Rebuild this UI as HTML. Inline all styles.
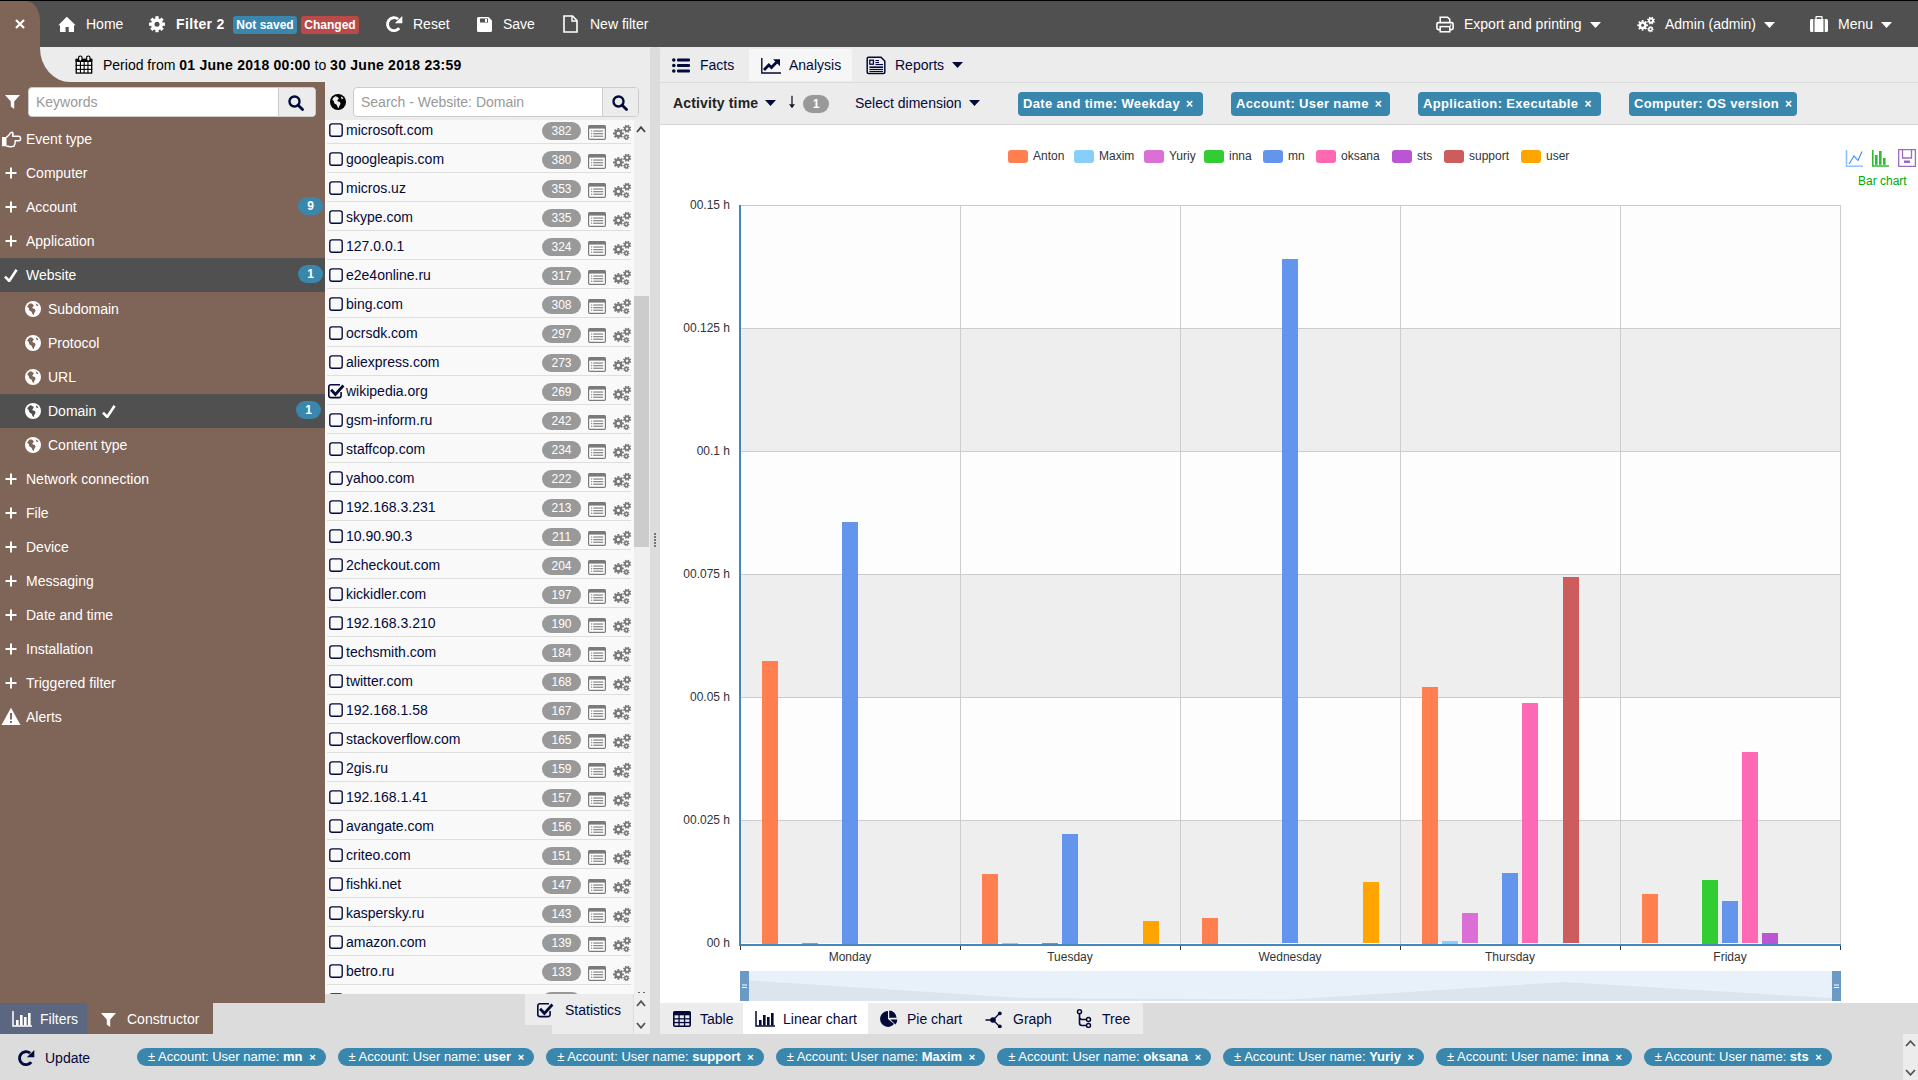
<!DOCTYPE html><html><head><meta charset="utf-8"><style>
html,body{margin:0;padding:0}
body{width:1918px;height:1080px;overflow:hidden;position:relative;background:#dcdcdc;font-family:"Liberation Sans",sans-serif}
</style></head><body>
<svg width="0" height="0" style="position:absolute"><symbol id="cb" viewBox="0 0 14 14"><rect x="0.8" y="0.8" width="12.4" height="12.4" rx="2.2" fill="none" stroke="#03093a" stroke-width="1.35"/></symbol><symbol id="la" viewBox="0 0 18 15"><rect x="0.6" y="0.6" width="16.8" height="13.8" rx="1.2" fill="#fff" stroke="#7a7a7a" stroke-width="1.2"/><rect x="0.6" y="0.6" width="16.8" height="3" fill="#7a7a7a"/><rect x="3" y="5.4" width="1.2" height="1.2" fill="#8a8a8a"/><rect x="5.2" y="5.4" width="10" height="1.3" fill="#8a8a8a"/><rect x="3" y="8.0" width="1.2" height="1.2" fill="#8a8a8a"/><rect x="5.2" y="8.0" width="10" height="1.3" fill="#8a8a8a"/><rect x="3" y="10.6" width="1.2" height="1.2" fill="#8a8a8a"/><rect x="5.2" y="10.6" width="10" height="1.3" fill="#8a8a8a"/></symbol><symbol id="cg" viewBox="0 0 19 18"><circle cx="5.4" cy="10.4" r="4.0" fill="#7a7a7a"/><rect x="4.45" y="5.0" width="1.9" height="5.4" fill="#7a7a7a" transform="rotate(0.0 5.4 10.4)"/><rect x="4.45" y="5.0" width="1.9" height="5.4" fill="#7a7a7a" transform="rotate(45.0 5.4 10.4)"/><rect x="4.45" y="5.0" width="1.9" height="5.4" fill="#7a7a7a" transform="rotate(90.0 5.4 10.4)"/><rect x="4.45" y="5.0" width="1.9" height="5.4" fill="#7a7a7a" transform="rotate(135.0 5.4 10.4)"/><rect x="4.45" y="5.0" width="1.9" height="5.4" fill="#7a7a7a" transform="rotate(180.0 5.4 10.4)"/><rect x="4.45" y="5.0" width="1.9" height="5.4" fill="#7a7a7a" transform="rotate(225.0 5.4 10.4)"/><rect x="4.45" y="5.0" width="1.9" height="5.4" fill="#7a7a7a" transform="rotate(270.0 5.4 10.4)"/><rect x="4.45" y="5.0" width="1.9" height="5.4" fill="#7a7a7a" transform="rotate(315.0 5.4 10.4)"/><circle cx="5.4" cy="10.4" r="1.6" fill="#f9f9f9"/><circle cx="14.1" cy="5.7" r="3.0" fill="#7a7a7a"/><rect x="13.35" y="1.6000000000000005" width="1.5" height="4.1" fill="#7a7a7a" transform="rotate(22.5 14.1 5.7)"/><rect x="13.35" y="1.6000000000000005" width="1.5" height="4.1" fill="#7a7a7a" transform="rotate(67.5 14.1 5.7)"/><rect x="13.35" y="1.6000000000000005" width="1.5" height="4.1" fill="#7a7a7a" transform="rotate(112.5 14.1 5.7)"/><rect x="13.35" y="1.6000000000000005" width="1.5" height="4.1" fill="#7a7a7a" transform="rotate(157.5 14.1 5.7)"/><rect x="13.35" y="1.6000000000000005" width="1.5" height="4.1" fill="#7a7a7a" transform="rotate(202.5 14.1 5.7)"/><rect x="13.35" y="1.6000000000000005" width="1.5" height="4.1" fill="#7a7a7a" transform="rotate(247.5 14.1 5.7)"/><rect x="13.35" y="1.6000000000000005" width="1.5" height="4.1" fill="#7a7a7a" transform="rotate(292.5 14.1 5.7)"/><rect x="13.35" y="1.6000000000000005" width="1.5" height="4.1" fill="#7a7a7a" transform="rotate(337.5 14.1 5.7)"/><circle cx="14.1" cy="5.7" r="1.2" fill="#f9f9f9"/><circle cx="13.3" cy="14.1" r="2.2" fill="#7a7a7a"/><rect x="12.700000000000001" y="11.0" width="1.2" height="3.1" fill="#7a7a7a" transform="rotate(10.0 13.3 14.1)"/><rect x="12.700000000000001" y="11.0" width="1.2" height="3.1" fill="#7a7a7a" transform="rotate(55.0 13.3 14.1)"/><rect x="12.700000000000001" y="11.0" width="1.2" height="3.1" fill="#7a7a7a" transform="rotate(100.0 13.3 14.1)"/><rect x="12.700000000000001" y="11.0" width="1.2" height="3.1" fill="#7a7a7a" transform="rotate(145.0 13.3 14.1)"/><rect x="12.700000000000001" y="11.0" width="1.2" height="3.1" fill="#7a7a7a" transform="rotate(190.0 13.3 14.1)"/><rect x="12.700000000000001" y="11.0" width="1.2" height="3.1" fill="#7a7a7a" transform="rotate(235.0 13.3 14.1)"/><rect x="12.700000000000001" y="11.0" width="1.2" height="3.1" fill="#7a7a7a" transform="rotate(280.0 13.3 14.1)"/><rect x="12.700000000000001" y="11.0" width="1.2" height="3.1" fill="#7a7a7a" transform="rotate(325.0 13.3 14.1)"/><circle cx="13.3" cy="14.1" r="0.9" fill="#f9f9f9"/></symbol><symbol id="cbc" viewBox="0 0 18 16"><path d="M13 1.8H4Q1.8 1.8 1.8 4V12.6Q1.8 14.6 4 14.6H12.1Q14.1 14.6 14.1 12.6V9" fill="none" stroke="#03093a" stroke-width="1.6"/><path d="M4.1 6.8L8.4 11.4L16.4 2.5" fill="none" stroke="#03093a" stroke-width="2.8"/></symbol></svg><div style="position:absolute;left:0px;top:0px;width:1918px;height:1px;background:#000;"></div>
<div style="position:absolute;left:0px;top:1px;width:1918px;height:46px;background:#505050;"></div>
<div style="position:absolute;left:0px;top:1px;width:40px;height:100px;background:#7f6458;border-top-right-radius:14px 20px"></div>
<div style="position:absolute;left:0px;top:47px;width:325px;height:956px;background:#7f6458;"></div>
<div style="position:absolute;left:40px;top:47px;width:620px;height:35px;background:#ececec;border-bottom-left-radius:30px 34px"></div>
<div style="position:absolute;left:325px;top:82px;width:325px;height:38px;background:#ececec;"></div>
<div style="position:absolute;left:325px;top:120px;width:309px;height:874px;background:#f9f9f9;"></div>
<div style="position:absolute;left:634px;top:120px;width:16px;height:914px;background:#efefef;"></div>
<div style="position:absolute;left:634px;top:296px;width:15px;height:251px;background:#cccccc;"></div>
<div style="position:absolute;left:650px;top:47px;width:10px;height:987px;background:#dcdcdc;border-radius:3px"></div>
<div style="position:absolute;left:654px;top:533px;width:2px;height:2px;background:#555;border-radius:1px"></div>
<div style="position:absolute;left:654px;top:536px;width:2px;height:2px;background:#555;border-radius:1px"></div>
<div style="position:absolute;left:654px;top:539px;width:2px;height:2px;background:#555;border-radius:1px"></div>
<div style="position:absolute;left:654px;top:542px;width:2px;height:2px;background:#555;border-radius:1px"></div>
<div style="position:absolute;left:654px;top:545px;width:2px;height:2px;background:#555;border-radius:1px"></div>
<div style="position:absolute;left:660px;top:47px;width:1258px;height:35px;background:#ececec;border-bottom:1px solid #dcdcdc"></div>
<div style="position:absolute;left:749px;top:49px;width:103px;height:32px;background:#f6f6f6;"></div>
<div style="position:absolute;left:660px;top:83px;width:1258px;height:41px;background:#ececec;border-bottom:1px solid #d6d6d6"></div>
<div style="position:absolute;left:660px;top:125px;width:1258px;height:878px;background:#fff;"></div>
<div style="position:absolute;left:660px;top:1003px;width:483px;height:31px;background:#ececec;"></div>
<div style="position:absolute;left:743px;top:1003px;width:125px;height:31px;background:#fff;"></div>
<div style="position:absolute;left:0px;top:1003px;width:87px;height:31px;background:#5b6680;"></div>
<div style="position:absolute;left:87px;top:1003px;width:126px;height:31px;background:#7f6458;"></div>
<div style="position:absolute;left:525px;top:994px;width:108px;height:31px;background:#ececec;"></div>
<div style="position:absolute;left:552px;top:1025px;width:81px;height:9px;background:#ececec;"></div>
<div style="position:absolute;left:1903px;top:1034px;width:15px;height:46px;background:#ececec;"></div>
<svg style="position:absolute;left:15px;top:19px" width="10" height="10" viewBox="0 0 10 10" ><path d="M1 1L9 9M9 1L1 9" stroke="#fff" stroke-width="2.2"/></svg>
<svg style="position:absolute;left:58px;top:16px" width="18" height="16" viewBox="0 0 18 16" ><path d="M8.8 0.8L17.7 9.3H16V16H10.7V11H7.6V16H2V9.3H0.3Z" fill="#fff"/></svg>
<div style="position:absolute;left:86px;top:16px;font-size:14px;line-height:16px;color:#fff;font-weight:normal;white-space:nowrap;">Home</div>
<svg style="position:absolute;left:149px;top:16px" width="18" height="18" viewBox="0 0 18 18" ><circle cx="8" cy="8.2" r="6" fill="#fff"/><rect x="6.4" y="0.1999999999999993" width="3.2" height="8" fill="#fff" transform="rotate(0.0 8 8.2)"/><rect x="6.4" y="0.1999999999999993" width="3.2" height="8" fill="#fff" transform="rotate(45.0 8 8.2)"/><rect x="6.4" y="0.1999999999999993" width="3.2" height="8" fill="#fff" transform="rotate(90.0 8 8.2)"/><rect x="6.4" y="0.1999999999999993" width="3.2" height="8" fill="#fff" transform="rotate(135.0 8 8.2)"/><rect x="6.4" y="0.1999999999999993" width="3.2" height="8" fill="#fff" transform="rotate(180.0 8 8.2)"/><rect x="6.4" y="0.1999999999999993" width="3.2" height="8" fill="#fff" transform="rotate(225.0 8 8.2)"/><rect x="6.4" y="0.1999999999999993" width="3.2" height="8" fill="#fff" transform="rotate(270.0 8 8.2)"/><rect x="6.4" y="0.1999999999999993" width="3.2" height="8" fill="#fff" transform="rotate(315.0 8 8.2)"/><circle cx="8" cy="8.2" r="2.5" fill="#505050"/></svg>
<div style="position:absolute;left:176px;top:16px;font-size:14px;line-height:16px;color:#fff;font-weight:bold;white-space:nowrap;letter-spacing:0.35px">Filter 2</div>
<div style="position:absolute;left:233px;top:16px;width:64px;height:18px;background:#3a87ad;border-radius:3px;color:#fff;font-weight:bold;font-size:12px;line-height:18px;text-align:center">Not saved</div>
<div style="position:absolute;left:301px;top:16px;width:58px;height:18px;background:#b94a48;border-radius:3px;color:#fff;font-weight:bold;font-size:12px;line-height:18px;text-align:center">Changed</div>
<svg style="position:absolute;left:385px;top:15px" width="18" height="18" viewBox="0 0 18 18" ><path d="M13.1 4.1A6.5 6.5 0 1 0 14.2 13.1" fill="none" stroke="#fff" stroke-width="2.9"/><path d="M9.8 8.3H17.3V0.9Z" fill="#fff"/></svg>
<div style="position:absolute;left:413px;top:16px;font-size:14px;line-height:16px;color:#fff;font-weight:normal;white-space:nowrap;">Reset</div>
<svg style="position:absolute;left:477px;top:17px" width="15" height="15" viewBox="0 0 15 15" ><path d="M0 1.5Q0 0 1.5 0H11.5L15 3.5V13.5Q15 15 13.5 15H1.5Q0 15 0 13.5Z" fill="#fff"/><rect x="3" y="1.5" width="8" height="4" fill="#505050"/><rect x="8" y="2" width="2" height="3" fill="#fff"/></svg>
<div style="position:absolute;left:503px;top:16px;font-size:14px;line-height:16px;color:#fff;font-weight:normal;white-space:nowrap;">Save</div>
<svg style="position:absolute;left:563px;top:15px" width="15" height="18" viewBox="0 0 15 18" ><path d="M1 1H9.5L14 5.5V17H1Z" fill="none" stroke="#fff" stroke-width="1.6"/><path d="M9 1V6H14" fill="none" stroke="#fff" stroke-width="1.4"/></svg>
<div style="position:absolute;left:590px;top:16px;font-size:14px;line-height:16px;color:#fff;font-weight:normal;white-space:nowrap;">New filter</div>
<svg style="position:absolute;left:1436px;top:16px" width="18" height="17" viewBox="0 0 18 17" ><path d="M4.2 7V1.2H11.6L13.8 3.4V7" fill="none" stroke="#fff" stroke-width="1.5"/><rect x="0.9" y="6.6" width="16.2" height="7" rx="1.5" fill="none" stroke="#fff" stroke-width="1.6"/><rect x="4.2" y="10.6" width="9.6" height="5.2" fill="#505050" stroke="#fff" stroke-width="1.5"/><rect x="14" y="8.5" width="1.3" height="1.3" fill="#fff"/></svg>
<div style="position:absolute;left:1464px;top:16px;font-size:14px;line-height:16px;color:#fff;font-weight:normal;white-space:nowrap;">Export and printing</div>
<svg style="position:absolute;left:1590px;top:22px" width="11" height="6" viewBox="0 0 11 6" ><path d="M0 0H11L5.5 6Z" fill="#fff"/></svg>
<svg style="position:absolute;left:1637px;top:16px" width="19" height="18" viewBox="0 0 19 18" ><circle cx="5.6" cy="9.3" r="3.9" fill="#fff"/><rect x="4.699999999999999" y="4.000000000000001" width="1.8" height="5.3" fill="#fff" transform="rotate(0.0 5.6 9.3)"/><rect x="4.699999999999999" y="4.000000000000001" width="1.8" height="5.3" fill="#fff" transform="rotate(45.0 5.6 9.3)"/><rect x="4.699999999999999" y="4.000000000000001" width="1.8" height="5.3" fill="#fff" transform="rotate(90.0 5.6 9.3)"/><rect x="4.699999999999999" y="4.000000000000001" width="1.8" height="5.3" fill="#fff" transform="rotate(135.0 5.6 9.3)"/><rect x="4.699999999999999" y="4.000000000000001" width="1.8" height="5.3" fill="#fff" transform="rotate(180.0 5.6 9.3)"/><rect x="4.699999999999999" y="4.000000000000001" width="1.8" height="5.3" fill="#fff" transform="rotate(225.0 5.6 9.3)"/><rect x="4.699999999999999" y="4.000000000000001" width="1.8" height="5.3" fill="#fff" transform="rotate(270.0 5.6 9.3)"/><rect x="4.699999999999999" y="4.000000000000001" width="1.8" height="5.3" fill="#fff" transform="rotate(315.0 5.6 9.3)"/><circle cx="5.6" cy="9.3" r="1.5" fill="#505050"/><circle cx="14" cy="4.6" r="2.9" fill="#fff"/><rect x="13.3" y="0.5999999999999996" width="1.4" height="4.0" fill="#fff" transform="rotate(22.5 14 4.6)"/><rect x="13.3" y="0.5999999999999996" width="1.4" height="4.0" fill="#fff" transform="rotate(67.5 14 4.6)"/><rect x="13.3" y="0.5999999999999996" width="1.4" height="4.0" fill="#fff" transform="rotate(112.5 14 4.6)"/><rect x="13.3" y="0.5999999999999996" width="1.4" height="4.0" fill="#fff" transform="rotate(157.5 14 4.6)"/><rect x="13.3" y="0.5999999999999996" width="1.4" height="4.0" fill="#fff" transform="rotate(202.5 14 4.6)"/><rect x="13.3" y="0.5999999999999996" width="1.4" height="4.0" fill="#fff" transform="rotate(247.5 14 4.6)"/><rect x="13.3" y="0.5999999999999996" width="1.4" height="4.0" fill="#fff" transform="rotate(292.5 14 4.6)"/><rect x="13.3" y="0.5999999999999996" width="1.4" height="4.0" fill="#fff" transform="rotate(337.5 14 4.6)"/><circle cx="14" cy="4.6" r="1.1" fill="#505050"/><circle cx="13.5" cy="13.2" r="2.2" fill="#fff"/><rect x="12.9" y="10.1" width="1.2" height="3.1" fill="#fff" transform="rotate(10.0 13.5 13.2)"/><rect x="12.9" y="10.1" width="1.2" height="3.1" fill="#fff" transform="rotate(55.0 13.5 13.2)"/><rect x="12.9" y="10.1" width="1.2" height="3.1" fill="#fff" transform="rotate(100.0 13.5 13.2)"/><rect x="12.9" y="10.1" width="1.2" height="3.1" fill="#fff" transform="rotate(145.0 13.5 13.2)"/><rect x="12.9" y="10.1" width="1.2" height="3.1" fill="#fff" transform="rotate(190.0 13.5 13.2)"/><rect x="12.9" y="10.1" width="1.2" height="3.1" fill="#fff" transform="rotate(235.0 13.5 13.2)"/><rect x="12.9" y="10.1" width="1.2" height="3.1" fill="#fff" transform="rotate(280.0 13.5 13.2)"/><rect x="12.9" y="10.1" width="1.2" height="3.1" fill="#fff" transform="rotate(325.0 13.5 13.2)"/><circle cx="13.5" cy="13.2" r="0.9" fill="#505050"/></svg>
<div style="position:absolute;left:1665px;top:16px;font-size:14px;line-height:16px;color:#fff;font-weight:normal;white-space:nowrap;">Admin (admin)</div>
<svg style="position:absolute;left:1764px;top:22px" width="11" height="6" viewBox="0 0 11 6" ><path d="M0 0H11L5.5 6Z" fill="#fff"/></svg>
<svg style="position:absolute;left:1810px;top:16px" width="18" height="16" viewBox="0 0 18 16" ><path d="M6 3V1.2Q6 0.5 6.8 0.5H11.2Q12 0.5 12 1.2V3" fill="none" stroke="#fff" stroke-width="1.3"/><rect x="0" y="3" width="18" height="13" rx="1.5" fill="#fff"/><rect x="3.3" y="3" width="1.2" height="13" fill="#505050"/><rect x="13.5" y="3" width="1.2" height="13" fill="#505050"/></svg>
<div style="position:absolute;left:1838px;top:16px;font-size:14px;line-height:16px;color:#fff;font-weight:normal;white-space:nowrap;">Menu</div>
<svg style="position:absolute;left:1881px;top:22px" width="11" height="6" viewBox="0 0 11 6" ><path d="M0 0H11L5.5 6Z" fill="#fff"/></svg>
<svg style="position:absolute;left:75px;top:55px" width="18" height="19" viewBox="0 0 18 19" ><rect x="1.25" y="4.45" width="15.4" height="13.6" fill="#fff" stroke="#000" stroke-width="1.3"/><rect x="0.6" y="3.8" width="16.7" height="3.2" fill="#000"/><rect x="4.9" y="6.5" width="1.1" height="11.5" fill="#000"/><rect x="8.6" y="6.5" width="1.1" height="11.5" fill="#000"/><rect x="12.4" y="6.5" width="1.1" height="11.5" fill="#000"/><rect x="0.6" y="9.8" width="16.7" height="1.1" fill="#000"/><rect x="0.6" y="13.8" width="16.7" height="1.1" fill="#000"/><rect x="3.6" y="1" width="3.4" height="5.2" rx="1.7" fill="#fff" stroke="#000" stroke-width="1.2"/><rect x="11.6" y="1" width="3.4" height="5.2" rx="1.7" fill="#fff" stroke="#000" stroke-width="1.2"/></svg>
<div style="position:absolute;left:103px;top:57px;font-size:14px;line-height:16px;color:#000;font-weight:normal;white-space:nowrap;">Period from <b style="letter-spacing:0.25px">01 June 2018 00:00</b> to <b style="letter-spacing:0.25px">30 June 2018 23:59</b></div>
<svg style="position:absolute;left:5px;top:95px" width="15" height="14" viewBox="0 0 15 14" ><path d="M0 0H15L9.2 6.5V14L5.8 11.5V6.5Z" fill="#fff"/></svg>
<div style="position:absolute;left:28px;top:87px;width:286px;height:28px;background:#fff;border:1px solid #ccc;border-radius:4px;overflow:hidden"><div style="position:absolute;left:7px;top:0;line-height:28px;font-size:14px;color:#999">Keywords</div><div style="position:absolute;right:0;top:0;width:36px;height:28px;background:#ececec;border-left:1px solid #ccc"></div></div><svg style="position:absolute;left:288px;top:95px" width="16" height="16" viewBox="0 0 16 16" ><circle cx="6.5" cy="6.5" r="5" fill="none" stroke="#03093a" stroke-width="2.4"/><path d="M10 10L14.5 14.5" stroke="#03093a" stroke-width="2.8" stroke-linecap="round"/></svg>
<svg style="position:absolute;left:0px;top:131px" width="22" height="17" viewBox="0 0 22 17" ><rect x="2" y="6" width="4.5" height="9.3" fill="#fff"/><path d="M6.3 6.5L9 4Q10.5 1.2 12 1.2Q13.6 1.8 12.6 5.2H19Q20.6 5.4 20.6 7.5Q20.6 9.6 19 9.7H15.2Q15.2 13.5 14 15Q12 16 9 15.5L6.3 15" fill="none" stroke="#fff" stroke-width="1.5" stroke-linejoin="round"/></svg>
<div style="position:absolute;left:26px;top:131px;font-size:14px;line-height:16px;color:#fff;font-weight:normal;white-space:nowrap;">Event type</div>
<svg style="position:absolute;left:5px;top:167px" width="12" height="12" viewBox="0 0 12 12" ><path d="M6 0.5V11.5M0.5 6H11.5" stroke="#fff" stroke-width="2"/></svg>
<div style="position:absolute;left:26px;top:165px;font-size:14px;line-height:16px;color:#fff;font-weight:normal;white-space:nowrap;">Computer</div>
<svg style="position:absolute;left:5px;top:201px" width="12" height="12" viewBox="0 0 12 12" ><path d="M6 0.5V11.5M0.5 6H11.5" stroke="#fff" stroke-width="2"/></svg>
<div style="position:absolute;left:26px;top:199px;font-size:14px;line-height:16px;color:#fff;font-weight:normal;white-space:nowrap;">Account</div>
<div style="position:absolute;left:298px;top:197px;width:25px;height:18px;background:#3a87ad;border-radius:9px;color:#fff;font-weight:bold;font-size:12px;line-height:18px;text-align:center">9</div>
<svg style="position:absolute;left:5px;top:235px" width="12" height="12" viewBox="0 0 12 12" ><path d="M6 0.5V11.5M0.5 6H11.5" stroke="#fff" stroke-width="2"/></svg>
<div style="position:absolute;left:26px;top:233px;font-size:14px;line-height:16px;color:#fff;font-weight:normal;white-space:nowrap;">Application</div>
<div style="position:absolute;left:0px;top:258px;width:325px;height:34px;background:#505050;"></div>
<svg style="position:absolute;left:3px;top:268px" width="16" height="14" viewBox="0 0 16 14" ><path d="M2 8.6L6.2 13L13.6 1.8" fill="none" stroke="#fff" stroke-width="2.6"/></svg>
<div style="position:absolute;left:26px;top:267px;font-size:14px;line-height:16px;color:#fff;font-weight:normal;white-space:nowrap;">Website</div>
<div style="position:absolute;left:298px;top:265px;width:25px;height:18px;background:#3a87ad;border-radius:9px;color:#fff;font-weight:bold;font-size:12px;line-height:18px;text-align:center">1</div>
<svg style="position:absolute;left:25px;top:301px" width="16" height="16" viewBox="0 0 16 16" ><circle cx="8" cy="8" r="8" fill="#fff"/><path d="M5.5 2.2C6.8 2.5 8 3 8.6 4.1C9 4.9 8.1 5.6 7.5 6.2C7 6.8 7.8 7.4 8.5 7.6C9.6 7.9 10.6 8.6 10.5 9.8C10.4 11 9.2 11.6 9 12.8L8.8 14.2C7.6 13.6 7.2 12.4 6.9 11.3C6.6 10.4 5.3 10.2 4.6 9.6C3.8 9 4.2 7.7 3.6 7C3.2 6.5 2.5 6.3 2.3 5.6C3 4 4.1 2.8 5.5 2.2Z" fill="#7f6458"/><path d="M11 2.6C12 3 12.8 3.8 13.4 4.6L12 5.2C11.5 4.6 10.8 4 11 2.6Z" fill="#7f6458"/></svg>
<div style="position:absolute;left:48px;top:301px;font-size:14px;line-height:16px;color:#fff;font-weight:normal;white-space:nowrap;">Subdomain</div>
<svg style="position:absolute;left:25px;top:335px" width="16" height="16" viewBox="0 0 16 16" ><circle cx="8" cy="8" r="8" fill="#fff"/><path d="M5.5 2.2C6.8 2.5 8 3 8.6 4.1C9 4.9 8.1 5.6 7.5 6.2C7 6.8 7.8 7.4 8.5 7.6C9.6 7.9 10.6 8.6 10.5 9.8C10.4 11 9.2 11.6 9 12.8L8.8 14.2C7.6 13.6 7.2 12.4 6.9 11.3C6.6 10.4 5.3 10.2 4.6 9.6C3.8 9 4.2 7.7 3.6 7C3.2 6.5 2.5 6.3 2.3 5.6C3 4 4.1 2.8 5.5 2.2Z" fill="#7f6458"/><path d="M11 2.6C12 3 12.8 3.8 13.4 4.6L12 5.2C11.5 4.6 10.8 4 11 2.6Z" fill="#7f6458"/></svg>
<div style="position:absolute;left:48px;top:335px;font-size:14px;line-height:16px;color:#fff;font-weight:normal;white-space:nowrap;">Protocol</div>
<svg style="position:absolute;left:25px;top:369px" width="16" height="16" viewBox="0 0 16 16" ><circle cx="8" cy="8" r="8" fill="#fff"/><path d="M5.5 2.2C6.8 2.5 8 3 8.6 4.1C9 4.9 8.1 5.6 7.5 6.2C7 6.8 7.8 7.4 8.5 7.6C9.6 7.9 10.6 8.6 10.5 9.8C10.4 11 9.2 11.6 9 12.8L8.8 14.2C7.6 13.6 7.2 12.4 6.9 11.3C6.6 10.4 5.3 10.2 4.6 9.6C3.8 9 4.2 7.7 3.6 7C3.2 6.5 2.5 6.3 2.3 5.6C3 4 4.1 2.8 5.5 2.2Z" fill="#7f6458"/><path d="M11 2.6C12 3 12.8 3.8 13.4 4.6L12 5.2C11.5 4.6 10.8 4 11 2.6Z" fill="#7f6458"/></svg>
<div style="position:absolute;left:48px;top:369px;font-size:14px;line-height:16px;color:#fff;font-weight:normal;white-space:nowrap;">URL</div>
<div style="position:absolute;left:0px;top:394px;width:325px;height:34px;background:#505050;"></div>
<svg style="position:absolute;left:25px;top:403px" width="16" height="16" viewBox="0 0 16 16" ><circle cx="8" cy="8" r="8" fill="#fff"/><path d="M5.5 2.2C6.8 2.5 8 3 8.6 4.1C9 4.9 8.1 5.6 7.5 6.2C7 6.8 7.8 7.4 8.5 7.6C9.6 7.9 10.6 8.6 10.5 9.8C10.4 11 9.2 11.6 9 12.8L8.8 14.2C7.6 13.6 7.2 12.4 6.9 11.3C6.6 10.4 5.3 10.2 4.6 9.6C3.8 9 4.2 7.7 3.6 7C3.2 6.5 2.5 6.3 2.3 5.6C3 4 4.1 2.8 5.5 2.2Z" fill="#505050"/><path d="M11 2.6C12 3 12.8 3.8 13.4 4.6L12 5.2C11.5 4.6 10.8 4 11 2.6Z" fill="#505050"/></svg>
<div style="position:absolute;left:48px;top:403px;font-size:14px;line-height:16px;color:#fff;font-weight:normal;white-space:nowrap;">Domain <span style="display:inline-block;width:16px"></span></div>
<svg style="position:absolute;left:101px;top:404px" width="16" height="14" viewBox="0 0 16 14" ><path d="M2 8.6L6.2 13L13.6 1.8" fill="none" stroke="#fff" stroke-width="2.6"/></svg>
<div style="position:absolute;left:296px;top:401px;width:25px;height:18px;background:#3a87ad;border-radius:9px;color:#fff;font-weight:bold;font-size:12px;line-height:18px;text-align:center">1</div>
<svg style="position:absolute;left:25px;top:437px" width="16" height="16" viewBox="0 0 16 16" ><circle cx="8" cy="8" r="8" fill="#fff"/><path d="M5.5 2.2C6.8 2.5 8 3 8.6 4.1C9 4.9 8.1 5.6 7.5 6.2C7 6.8 7.8 7.4 8.5 7.6C9.6 7.9 10.6 8.6 10.5 9.8C10.4 11 9.2 11.6 9 12.8L8.8 14.2C7.6 13.6 7.2 12.4 6.9 11.3C6.6 10.4 5.3 10.2 4.6 9.6C3.8 9 4.2 7.7 3.6 7C3.2 6.5 2.5 6.3 2.3 5.6C3 4 4.1 2.8 5.5 2.2Z" fill="#7f6458"/><path d="M11 2.6C12 3 12.8 3.8 13.4 4.6L12 5.2C11.5 4.6 10.8 4 11 2.6Z" fill="#7f6458"/></svg>
<div style="position:absolute;left:48px;top:437px;font-size:14px;line-height:16px;color:#fff;font-weight:normal;white-space:nowrap;">Content type</div>
<svg style="position:absolute;left:5px;top:473px" width="12" height="12" viewBox="0 0 12 12" ><path d="M6 0.5V11.5M0.5 6H11.5" stroke="#fff" stroke-width="2"/></svg>
<div style="position:absolute;left:26px;top:471px;font-size:14px;line-height:16px;color:#fff;font-weight:normal;white-space:nowrap;">Network connection</div>
<svg style="position:absolute;left:5px;top:507px" width="12" height="12" viewBox="0 0 12 12" ><path d="M6 0.5V11.5M0.5 6H11.5" stroke="#fff" stroke-width="2"/></svg>
<div style="position:absolute;left:26px;top:505px;font-size:14px;line-height:16px;color:#fff;font-weight:normal;white-space:nowrap;">File</div>
<svg style="position:absolute;left:5px;top:541px" width="12" height="12" viewBox="0 0 12 12" ><path d="M6 0.5V11.5M0.5 6H11.5" stroke="#fff" stroke-width="2"/></svg>
<div style="position:absolute;left:26px;top:539px;font-size:14px;line-height:16px;color:#fff;font-weight:normal;white-space:nowrap;">Device</div>
<svg style="position:absolute;left:5px;top:575px" width="12" height="12" viewBox="0 0 12 12" ><path d="M6 0.5V11.5M0.5 6H11.5" stroke="#fff" stroke-width="2"/></svg>
<div style="position:absolute;left:26px;top:573px;font-size:14px;line-height:16px;color:#fff;font-weight:normal;white-space:nowrap;">Messaging</div>
<svg style="position:absolute;left:5px;top:609px" width="12" height="12" viewBox="0 0 12 12" ><path d="M6 0.5V11.5M0.5 6H11.5" stroke="#fff" stroke-width="2"/></svg>
<div style="position:absolute;left:26px;top:607px;font-size:14px;line-height:16px;color:#fff;font-weight:normal;white-space:nowrap;">Date and time</div>
<svg style="position:absolute;left:5px;top:643px" width="12" height="12" viewBox="0 0 12 12" ><path d="M6 0.5V11.5M0.5 6H11.5" stroke="#fff" stroke-width="2"/></svg>
<div style="position:absolute;left:26px;top:641px;font-size:14px;line-height:16px;color:#fff;font-weight:normal;white-space:nowrap;">Installation</div>
<svg style="position:absolute;left:5px;top:677px" width="12" height="12" viewBox="0 0 12 12" ><path d="M6 0.5V11.5M0.5 6H11.5" stroke="#fff" stroke-width="2"/></svg>
<div style="position:absolute;left:26px;top:675px;font-size:14px;line-height:16px;color:#fff;font-weight:normal;white-space:nowrap;">Triggered filter</div>
<svg style="position:absolute;left:0px;top:707px" width="22" height="19" viewBox="0 0 22 19" ><path d="M11 0.8L20.5 18H1.5Z" fill="#fff"/><path d="M11 6V12.6" stroke="#7f6458" stroke-width="2"/><rect x="10" y="14" width="2" height="1.9" fill="#7f6458"/></svg>
<div style="position:absolute;left:26px;top:709px;font-size:14px;line-height:16px;color:#fff;font-weight:normal;white-space:nowrap;">Alerts</div>
<svg style="position:absolute;left:330px;top:94px" width="16" height="16" viewBox="0 0 16 16" ><circle cx="8" cy="8" r="8" fill="#000"/><path d="M5.5 2.2C6.8 2.5 8 3 8.6 4.1C9 4.9 8.1 5.6 7.5 6.2C7 6.8 7.8 7.4 8.5 7.6C9.6 7.9 10.6 8.6 10.5 9.8C10.4 11 9.2 11.6 9 12.8L8.8 14.2C7.6 13.6 7.2 12.4 6.9 11.3C6.6 10.4 5.3 10.2 4.6 9.6C3.8 9 4.2 7.7 3.6 7C3.2 6.5 2.5 6.3 2.3 5.6C3 4 4.1 2.8 5.5 2.2Z" fill="#ececec"/><path d="M11 2.6C12 3 12.8 3.8 13.4 4.6L12 5.2C11.5 4.6 10.8 4 11 2.6Z" fill="#ececec"/></svg>
<div style="position:absolute;left:353px;top:87px;width:284px;height:28px;background:#fff;border:1px solid #ccc;border-radius:4px;overflow:hidden"><div style="position:absolute;left:7px;top:0;line-height:28px;font-size:14px;color:#999">Search - Website: Domain</div><div style="position:absolute;right:0;top:0;width:35px;height:28px;background:#ececec;border-left:1px solid #ccc"></div></div><svg style="position:absolute;left:612px;top:95px" width="16" height="16" viewBox="0 0 16 16" ><circle cx="6.5" cy="6.5" r="5" fill="none" stroke="#03093a" stroke-width="2.4"/><path d="M10 10L14.5 14.5" stroke="#03093a" stroke-width="2.8" stroke-linecap="round"/></svg>
<div style="position:absolute;left:325px;top:120px;width:309px;height:874px;overflow:hidden"><div style="position:absolute;left:2px;top:23px;width:304px;height:1px;background:#dedede"></div><svg style="position:absolute;left:4px;top:3px" width="14" height="14"><use href="#cb"/></svg><div style="position:absolute;left:21px;top:2px;font-size:14px;line-height:16px;color:#03093a;white-space:nowrap">microsoft.com</div><div style="position:absolute;left:217px;top:2px;width:39px;height:18px;border-radius:9px;background:#999;color:#fff;font-size:12px;line-height:18px;text-align:center">382</div><svg style="position:absolute;left:263px;top:5px" width="18" height="15"><use href="#la"/></svg><svg style="position:absolute;left:288px;top:3px" width="19" height="18"><use href="#cg"/></svg><div style="position:absolute;left:2px;top:52px;width:304px;height:1px;background:#dedede"></div><svg style="position:absolute;left:4px;top:32px" width="14" height="14"><use href="#cb"/></svg><div style="position:absolute;left:21px;top:31px;font-size:14px;line-height:16px;color:#03093a;white-space:nowrap">googleapis.com</div><div style="position:absolute;left:217px;top:31px;width:39px;height:18px;border-radius:9px;background:#999;color:#fff;font-size:12px;line-height:18px;text-align:center">380</div><svg style="position:absolute;left:263px;top:34px" width="18" height="15"><use href="#la"/></svg><svg style="position:absolute;left:288px;top:32px" width="19" height="18"><use href="#cg"/></svg><div style="position:absolute;left:2px;top:81px;width:304px;height:1px;background:#dedede"></div><svg style="position:absolute;left:4px;top:61px" width="14" height="14"><use href="#cb"/></svg><div style="position:absolute;left:21px;top:60px;font-size:14px;line-height:16px;color:#03093a;white-space:nowrap">micros.uz</div><div style="position:absolute;left:217px;top:60px;width:39px;height:18px;border-radius:9px;background:#999;color:#fff;font-size:12px;line-height:18px;text-align:center">353</div><svg style="position:absolute;left:263px;top:63px" width="18" height="15"><use href="#la"/></svg><svg style="position:absolute;left:288px;top:61px" width="19" height="18"><use href="#cg"/></svg><div style="position:absolute;left:2px;top:110px;width:304px;height:1px;background:#dedede"></div><svg style="position:absolute;left:4px;top:90px" width="14" height="14"><use href="#cb"/></svg><div style="position:absolute;left:21px;top:89px;font-size:14px;line-height:16px;color:#03093a;white-space:nowrap">skype.com</div><div style="position:absolute;left:217px;top:89px;width:39px;height:18px;border-radius:9px;background:#999;color:#fff;font-size:12px;line-height:18px;text-align:center">335</div><svg style="position:absolute;left:263px;top:92px" width="18" height="15"><use href="#la"/></svg><svg style="position:absolute;left:288px;top:90px" width="19" height="18"><use href="#cg"/></svg><div style="position:absolute;left:2px;top:139px;width:304px;height:1px;background:#dedede"></div><svg style="position:absolute;left:4px;top:119px" width="14" height="14"><use href="#cb"/></svg><div style="position:absolute;left:21px;top:118px;font-size:14px;line-height:16px;color:#03093a;white-space:nowrap">127.0.0.1</div><div style="position:absolute;left:217px;top:118px;width:39px;height:18px;border-radius:9px;background:#999;color:#fff;font-size:12px;line-height:18px;text-align:center">324</div><svg style="position:absolute;left:263px;top:121px" width="18" height="15"><use href="#la"/></svg><svg style="position:absolute;left:288px;top:119px" width="19" height="18"><use href="#cg"/></svg><div style="position:absolute;left:2px;top:168px;width:304px;height:1px;background:#dedede"></div><svg style="position:absolute;left:4px;top:148px" width="14" height="14"><use href="#cb"/></svg><div style="position:absolute;left:21px;top:147px;font-size:14px;line-height:16px;color:#03093a;white-space:nowrap">e2e4online.ru</div><div style="position:absolute;left:217px;top:147px;width:39px;height:18px;border-radius:9px;background:#999;color:#fff;font-size:12px;line-height:18px;text-align:center">317</div><svg style="position:absolute;left:263px;top:150px" width="18" height="15"><use href="#la"/></svg><svg style="position:absolute;left:288px;top:148px" width="19" height="18"><use href="#cg"/></svg><div style="position:absolute;left:2px;top:197px;width:304px;height:1px;background:#dedede"></div><svg style="position:absolute;left:4px;top:177px" width="14" height="14"><use href="#cb"/></svg><div style="position:absolute;left:21px;top:176px;font-size:14px;line-height:16px;color:#03093a;white-space:nowrap">bing.com</div><div style="position:absolute;left:217px;top:176px;width:39px;height:18px;border-radius:9px;background:#999;color:#fff;font-size:12px;line-height:18px;text-align:center">308</div><svg style="position:absolute;left:263px;top:179px" width="18" height="15"><use href="#la"/></svg><svg style="position:absolute;left:288px;top:177px" width="19" height="18"><use href="#cg"/></svg><div style="position:absolute;left:2px;top:226px;width:304px;height:1px;background:#dedede"></div><svg style="position:absolute;left:4px;top:206px" width="14" height="14"><use href="#cb"/></svg><div style="position:absolute;left:21px;top:205px;font-size:14px;line-height:16px;color:#03093a;white-space:nowrap">ocrsdk.com</div><div style="position:absolute;left:217px;top:205px;width:39px;height:18px;border-radius:9px;background:#999;color:#fff;font-size:12px;line-height:18px;text-align:center">297</div><svg style="position:absolute;left:263px;top:208px" width="18" height="15"><use href="#la"/></svg><svg style="position:absolute;left:288px;top:206px" width="19" height="18"><use href="#cg"/></svg><div style="position:absolute;left:2px;top:255px;width:304px;height:1px;background:#dedede"></div><svg style="position:absolute;left:4px;top:235px" width="14" height="14"><use href="#cb"/></svg><div style="position:absolute;left:21px;top:234px;font-size:14px;line-height:16px;color:#03093a;white-space:nowrap">aliexpress.com</div><div style="position:absolute;left:217px;top:234px;width:39px;height:18px;border-radius:9px;background:#999;color:#fff;font-size:12px;line-height:18px;text-align:center">273</div><svg style="position:absolute;left:263px;top:237px" width="18" height="15"><use href="#la"/></svg><svg style="position:absolute;left:288px;top:235px" width="19" height="18"><use href="#cg"/></svg><div style="position:absolute;left:2px;top:284px;width:304px;height:1px;background:#dedede"></div><svg style="position:absolute;left:2px;top:263px" width="18" height="16"><use href="#cbc"/></svg><div style="position:absolute;left:21px;top:263px;font-size:14px;line-height:16px;color:#03093a;white-space:nowrap">wikipedia.org</div><div style="position:absolute;left:217px;top:263px;width:39px;height:18px;border-radius:9px;background:#999;color:#fff;font-size:12px;line-height:18px;text-align:center">269</div><svg style="position:absolute;left:263px;top:266px" width="18" height="15"><use href="#la"/></svg><svg style="position:absolute;left:288px;top:264px" width="19" height="18"><use href="#cg"/></svg><div style="position:absolute;left:2px;top:313px;width:304px;height:1px;background:#dedede"></div><svg style="position:absolute;left:4px;top:293px" width="14" height="14"><use href="#cb"/></svg><div style="position:absolute;left:21px;top:292px;font-size:14px;line-height:16px;color:#03093a;white-space:nowrap">gsm-inform.ru</div><div style="position:absolute;left:217px;top:292px;width:39px;height:18px;border-radius:9px;background:#999;color:#fff;font-size:12px;line-height:18px;text-align:center">242</div><svg style="position:absolute;left:263px;top:295px" width="18" height="15"><use href="#la"/></svg><svg style="position:absolute;left:288px;top:293px" width="19" height="18"><use href="#cg"/></svg><div style="position:absolute;left:2px;top:342px;width:304px;height:1px;background:#dedede"></div><svg style="position:absolute;left:4px;top:322px" width="14" height="14"><use href="#cb"/></svg><div style="position:absolute;left:21px;top:321px;font-size:14px;line-height:16px;color:#03093a;white-space:nowrap">staffcop.com</div><div style="position:absolute;left:217px;top:321px;width:39px;height:18px;border-radius:9px;background:#999;color:#fff;font-size:12px;line-height:18px;text-align:center">234</div><svg style="position:absolute;left:263px;top:324px" width="18" height="15"><use href="#la"/></svg><svg style="position:absolute;left:288px;top:322px" width="19" height="18"><use href="#cg"/></svg><div style="position:absolute;left:2px;top:371px;width:304px;height:1px;background:#dedede"></div><svg style="position:absolute;left:4px;top:351px" width="14" height="14"><use href="#cb"/></svg><div style="position:absolute;left:21px;top:350px;font-size:14px;line-height:16px;color:#03093a;white-space:nowrap">yahoo.com</div><div style="position:absolute;left:217px;top:350px;width:39px;height:18px;border-radius:9px;background:#999;color:#fff;font-size:12px;line-height:18px;text-align:center">222</div><svg style="position:absolute;left:263px;top:353px" width="18" height="15"><use href="#la"/></svg><svg style="position:absolute;left:288px;top:351px" width="19" height="18"><use href="#cg"/></svg><div style="position:absolute;left:2px;top:400px;width:304px;height:1px;background:#dedede"></div><svg style="position:absolute;left:4px;top:380px" width="14" height="14"><use href="#cb"/></svg><div style="position:absolute;left:21px;top:379px;font-size:14px;line-height:16px;color:#03093a;white-space:nowrap">192.168.3.231</div><div style="position:absolute;left:217px;top:379px;width:39px;height:18px;border-radius:9px;background:#999;color:#fff;font-size:12px;line-height:18px;text-align:center">213</div><svg style="position:absolute;left:263px;top:382px" width="18" height="15"><use href="#la"/></svg><svg style="position:absolute;left:288px;top:380px" width="19" height="18"><use href="#cg"/></svg><div style="position:absolute;left:2px;top:429px;width:304px;height:1px;background:#dedede"></div><svg style="position:absolute;left:4px;top:409px" width="14" height="14"><use href="#cb"/></svg><div style="position:absolute;left:21px;top:408px;font-size:14px;line-height:16px;color:#03093a;white-space:nowrap">10.90.90.3</div><div style="position:absolute;left:217px;top:408px;width:39px;height:18px;border-radius:9px;background:#999;color:#fff;font-size:12px;line-height:18px;text-align:center">211</div><svg style="position:absolute;left:263px;top:411px" width="18" height="15"><use href="#la"/></svg><svg style="position:absolute;left:288px;top:409px" width="19" height="18"><use href="#cg"/></svg><div style="position:absolute;left:2px;top:458px;width:304px;height:1px;background:#dedede"></div><svg style="position:absolute;left:4px;top:438px" width="14" height="14"><use href="#cb"/></svg><div style="position:absolute;left:21px;top:437px;font-size:14px;line-height:16px;color:#03093a;white-space:nowrap">2checkout.com</div><div style="position:absolute;left:217px;top:437px;width:39px;height:18px;border-radius:9px;background:#999;color:#fff;font-size:12px;line-height:18px;text-align:center">204</div><svg style="position:absolute;left:263px;top:440px" width="18" height="15"><use href="#la"/></svg><svg style="position:absolute;left:288px;top:438px" width="19" height="18"><use href="#cg"/></svg><div style="position:absolute;left:2px;top:487px;width:304px;height:1px;background:#dedede"></div><svg style="position:absolute;left:4px;top:467px" width="14" height="14"><use href="#cb"/></svg><div style="position:absolute;left:21px;top:466px;font-size:14px;line-height:16px;color:#03093a;white-space:nowrap">kickidler.com</div><div style="position:absolute;left:217px;top:466px;width:39px;height:18px;border-radius:9px;background:#999;color:#fff;font-size:12px;line-height:18px;text-align:center">197</div><svg style="position:absolute;left:263px;top:469px" width="18" height="15"><use href="#la"/></svg><svg style="position:absolute;left:288px;top:467px" width="19" height="18"><use href="#cg"/></svg><div style="position:absolute;left:2px;top:516px;width:304px;height:1px;background:#dedede"></div><svg style="position:absolute;left:4px;top:496px" width="14" height="14"><use href="#cb"/></svg><div style="position:absolute;left:21px;top:495px;font-size:14px;line-height:16px;color:#03093a;white-space:nowrap">192.168.3.210</div><div style="position:absolute;left:217px;top:495px;width:39px;height:18px;border-radius:9px;background:#999;color:#fff;font-size:12px;line-height:18px;text-align:center">190</div><svg style="position:absolute;left:263px;top:498px" width="18" height="15"><use href="#la"/></svg><svg style="position:absolute;left:288px;top:496px" width="19" height="18"><use href="#cg"/></svg><div style="position:absolute;left:2px;top:545px;width:304px;height:1px;background:#dedede"></div><svg style="position:absolute;left:4px;top:525px" width="14" height="14"><use href="#cb"/></svg><div style="position:absolute;left:21px;top:524px;font-size:14px;line-height:16px;color:#03093a;white-space:nowrap">techsmith.com</div><div style="position:absolute;left:217px;top:524px;width:39px;height:18px;border-radius:9px;background:#999;color:#fff;font-size:12px;line-height:18px;text-align:center">184</div><svg style="position:absolute;left:263px;top:527px" width="18" height="15"><use href="#la"/></svg><svg style="position:absolute;left:288px;top:525px" width="19" height="18"><use href="#cg"/></svg><div style="position:absolute;left:2px;top:574px;width:304px;height:1px;background:#dedede"></div><svg style="position:absolute;left:4px;top:554px" width="14" height="14"><use href="#cb"/></svg><div style="position:absolute;left:21px;top:553px;font-size:14px;line-height:16px;color:#03093a;white-space:nowrap">twitter.com</div><div style="position:absolute;left:217px;top:553px;width:39px;height:18px;border-radius:9px;background:#999;color:#fff;font-size:12px;line-height:18px;text-align:center">168</div><svg style="position:absolute;left:263px;top:556px" width="18" height="15"><use href="#la"/></svg><svg style="position:absolute;left:288px;top:554px" width="19" height="18"><use href="#cg"/></svg><div style="position:absolute;left:2px;top:603px;width:304px;height:1px;background:#dedede"></div><svg style="position:absolute;left:4px;top:583px" width="14" height="14"><use href="#cb"/></svg><div style="position:absolute;left:21px;top:582px;font-size:14px;line-height:16px;color:#03093a;white-space:nowrap">192.168.1.58</div><div style="position:absolute;left:217px;top:582px;width:39px;height:18px;border-radius:9px;background:#999;color:#fff;font-size:12px;line-height:18px;text-align:center">167</div><svg style="position:absolute;left:263px;top:585px" width="18" height="15"><use href="#la"/></svg><svg style="position:absolute;left:288px;top:583px" width="19" height="18"><use href="#cg"/></svg><div style="position:absolute;left:2px;top:632px;width:304px;height:1px;background:#dedede"></div><svg style="position:absolute;left:4px;top:612px" width="14" height="14"><use href="#cb"/></svg><div style="position:absolute;left:21px;top:611px;font-size:14px;line-height:16px;color:#03093a;white-space:nowrap">stackoverflow.com</div><div style="position:absolute;left:217px;top:611px;width:39px;height:18px;border-radius:9px;background:#999;color:#fff;font-size:12px;line-height:18px;text-align:center">165</div><svg style="position:absolute;left:263px;top:614px" width="18" height="15"><use href="#la"/></svg><svg style="position:absolute;left:288px;top:612px" width="19" height="18"><use href="#cg"/></svg><div style="position:absolute;left:2px;top:661px;width:304px;height:1px;background:#dedede"></div><svg style="position:absolute;left:4px;top:641px" width="14" height="14"><use href="#cb"/></svg><div style="position:absolute;left:21px;top:640px;font-size:14px;line-height:16px;color:#03093a;white-space:nowrap">2gis.ru</div><div style="position:absolute;left:217px;top:640px;width:39px;height:18px;border-radius:9px;background:#999;color:#fff;font-size:12px;line-height:18px;text-align:center">159</div><svg style="position:absolute;left:263px;top:643px" width="18" height="15"><use href="#la"/></svg><svg style="position:absolute;left:288px;top:641px" width="19" height="18"><use href="#cg"/></svg><div style="position:absolute;left:2px;top:690px;width:304px;height:1px;background:#dedede"></div><svg style="position:absolute;left:4px;top:670px" width="14" height="14"><use href="#cb"/></svg><div style="position:absolute;left:21px;top:669px;font-size:14px;line-height:16px;color:#03093a;white-space:nowrap">192.168.1.41</div><div style="position:absolute;left:217px;top:669px;width:39px;height:18px;border-radius:9px;background:#999;color:#fff;font-size:12px;line-height:18px;text-align:center">157</div><svg style="position:absolute;left:263px;top:672px" width="18" height="15"><use href="#la"/></svg><svg style="position:absolute;left:288px;top:670px" width="19" height="18"><use href="#cg"/></svg><div style="position:absolute;left:2px;top:719px;width:304px;height:1px;background:#dedede"></div><svg style="position:absolute;left:4px;top:699px" width="14" height="14"><use href="#cb"/></svg><div style="position:absolute;left:21px;top:698px;font-size:14px;line-height:16px;color:#03093a;white-space:nowrap">avangate.com</div><div style="position:absolute;left:217px;top:698px;width:39px;height:18px;border-radius:9px;background:#999;color:#fff;font-size:12px;line-height:18px;text-align:center">156</div><svg style="position:absolute;left:263px;top:701px" width="18" height="15"><use href="#la"/></svg><svg style="position:absolute;left:288px;top:699px" width="19" height="18"><use href="#cg"/></svg><div style="position:absolute;left:2px;top:748px;width:304px;height:1px;background:#dedede"></div><svg style="position:absolute;left:4px;top:728px" width="14" height="14"><use href="#cb"/></svg><div style="position:absolute;left:21px;top:727px;font-size:14px;line-height:16px;color:#03093a;white-space:nowrap">criteo.com</div><div style="position:absolute;left:217px;top:727px;width:39px;height:18px;border-radius:9px;background:#999;color:#fff;font-size:12px;line-height:18px;text-align:center">151</div><svg style="position:absolute;left:263px;top:730px" width="18" height="15"><use href="#la"/></svg><svg style="position:absolute;left:288px;top:728px" width="19" height="18"><use href="#cg"/></svg><div style="position:absolute;left:2px;top:777px;width:304px;height:1px;background:#dedede"></div><svg style="position:absolute;left:4px;top:757px" width="14" height="14"><use href="#cb"/></svg><div style="position:absolute;left:21px;top:756px;font-size:14px;line-height:16px;color:#03093a;white-space:nowrap">fishki.net</div><div style="position:absolute;left:217px;top:756px;width:39px;height:18px;border-radius:9px;background:#999;color:#fff;font-size:12px;line-height:18px;text-align:center">147</div><svg style="position:absolute;left:263px;top:759px" width="18" height="15"><use href="#la"/></svg><svg style="position:absolute;left:288px;top:757px" width="19" height="18"><use href="#cg"/></svg><div style="position:absolute;left:2px;top:806px;width:304px;height:1px;background:#dedede"></div><svg style="position:absolute;left:4px;top:786px" width="14" height="14"><use href="#cb"/></svg><div style="position:absolute;left:21px;top:785px;font-size:14px;line-height:16px;color:#03093a;white-space:nowrap">kaspersky.ru</div><div style="position:absolute;left:217px;top:785px;width:39px;height:18px;border-radius:9px;background:#999;color:#fff;font-size:12px;line-height:18px;text-align:center">143</div><svg style="position:absolute;left:263px;top:788px" width="18" height="15"><use href="#la"/></svg><svg style="position:absolute;left:288px;top:786px" width="19" height="18"><use href="#cg"/></svg><div style="position:absolute;left:2px;top:835px;width:304px;height:1px;background:#dedede"></div><svg style="position:absolute;left:4px;top:815px" width="14" height="14"><use href="#cb"/></svg><div style="position:absolute;left:21px;top:814px;font-size:14px;line-height:16px;color:#03093a;white-space:nowrap">amazon.com</div><div style="position:absolute;left:217px;top:814px;width:39px;height:18px;border-radius:9px;background:#999;color:#fff;font-size:12px;line-height:18px;text-align:center">139</div><svg style="position:absolute;left:263px;top:817px" width="18" height="15"><use href="#la"/></svg><svg style="position:absolute;left:288px;top:815px" width="19" height="18"><use href="#cg"/></svg><div style="position:absolute;left:2px;top:864px;width:304px;height:1px;background:#dedede"></div><svg style="position:absolute;left:4px;top:844px" width="14" height="14"><use href="#cb"/></svg><div style="position:absolute;left:21px;top:843px;font-size:14px;line-height:16px;color:#03093a;white-space:nowrap">betro.ru</div><div style="position:absolute;left:217px;top:843px;width:39px;height:18px;border-radius:9px;background:#999;color:#fff;font-size:12px;line-height:18px;text-align:center">133</div><svg style="position:absolute;left:263px;top:846px" width="18" height="15"><use href="#la"/></svg><svg style="position:absolute;left:288px;top:844px" width="19" height="18"><use href="#cg"/></svg><div style="position:absolute;left:2px;top:893px;width:304px;height:1px;background:#dedede"></div><svg style="position:absolute;left:4px;top:873px" width="14" height="14"><use href="#cb"/></svg><div style="position:absolute;left:21px;top:872px;font-size:14px;line-height:16px;color:#03093a;white-space:nowrap">google.ru</div><div style="position:absolute;left:217px;top:872px;width:39px;height:18px;border-radius:9px;background:#999;color:#fff;font-size:12px;line-height:18px;text-align:center">131</div><svg style="position:absolute;left:263px;top:875px" width="18" height="15"><use href="#la"/></svg><svg style="position:absolute;left:288px;top:873px" width="19" height="18"><use href="#cg"/></svg></div>
<svg style="position:absolute;left:636px;top:126px" width="10" height="7" viewBox="0 0 10 7" ><path d="M1 6L5.0 1.2L9 6" fill="none" stroke="#444" stroke-width="1.8"/></svg>
<svg style="position:absolute;left:636px;top:1000px" width="10" height="7" viewBox="0 0 10 7" ><path d="M1 6L5.0 1.2L9 6" fill="none" stroke="#555" stroke-width="1.8"/></svg>
<div style="position:absolute;left:638px;top:992px;width:2px;height:1px;background:#666;"></div>
<div style="position:absolute;left:643px;top:992px;width:2px;height:1px;background:#666;"></div>
<svg style="position:absolute;left:636px;top:1022px" width="10" height="7" viewBox="0 0 10 7" ><path d="M1 1L5.0 5.8L9 1" fill="none" stroke="#555" stroke-width="1.8"/></svg>
<svg style="position:absolute;left:536px;top:1002px" width="18" height="16"><use href="#cbc"/></svg>
<div style="position:absolute;left:565px;top:1002px;font-size:14px;line-height:16px;color:#03093a;font-weight:normal;white-space:nowrap;">Statistics</div>
<svg style="position:absolute;left:672px;top:58px" width="18" height="15" viewBox="0 0 18 15" ><circle cx="1.8" cy="2" r="1.8" fill="#03093a"/><rect x="5" y="0.5" width="13" height="3" rx="1" fill="#03093a"/><circle cx="1.8" cy="7.5" r="1.8" fill="#03093a"/><rect x="5" y="6.0" width="13" height="3" rx="1" fill="#03093a"/><circle cx="1.8" cy="13" r="1.8" fill="#03093a"/><rect x="5" y="11.5" width="13" height="3" rx="1" fill="#03093a"/></svg>
<div style="position:absolute;left:700px;top:57px;font-size:14px;line-height:16px;color:#03093a;font-weight:normal;white-space:nowrap;">Facts</div>
<svg style="position:absolute;left:761px;top:58px" width="21" height="16" viewBox="0 0 21 16" ><path d="M0.8 0V15H20" fill="none" stroke="#03093a" stroke-width="1.4"/><path d="M3 12L7.8 7L10.5 9.5L15.5 4.2" fill="none" stroke="#03093a" stroke-width="2.8"/><path d="M12 1.2H19V8.2Z" fill="#03093a"/></svg>
<div style="position:absolute;left:789px;top:57px;font-size:14px;line-height:16px;color:#03093a;font-weight:normal;white-space:nowrap;">Analysis</div>
<svg style="position:absolute;left:866px;top:56px" width="20" height="19" viewBox="0 0 20 19" ><path d="M2.4 1.2H15L18.8 5V16.2Q18.8 17.5 17.5 17.5H2.5Q1.2 17.5 1.2 16.2V2.4Q1.2 1.2 2.4 1.2Z" fill="none" stroke="#03093a" stroke-width="1.5"/><rect x="3.8" y="4.2" width="3.6" height="4" fill="none" stroke="#03093a" stroke-width="1.3"/><rect x="9.5" y="4" width="3.5" height="1.1" fill="#03093a"/><rect x="9.5" y="6" width="3.5" height="1.1" fill="#03093a"/><rect x="9.5" y="8" width="7.5" height="1.1" fill="#03093a"/><rect x="3.4" y="10.4" width="13.6" height="1.6" fill="#03093a"/><rect x="3.4" y="12.9" width="13.6" height="1.1" fill="#03093a"/><rect x="3.4" y="14.9" width="13.6" height="1.1" fill="#03093a"/></svg>
<div style="position:absolute;left:895px;top:57px;font-size:14px;line-height:16px;color:#03093a;font-weight:normal;white-space:nowrap;">Reports</div>
<svg style="position:absolute;left:952px;top:62px" width="11" height="6" viewBox="0 0 11 6" ><path d="M0 0H11L5.5 6Z" fill="#03093a"/></svg>
<div style="position:absolute;left:673px;top:95px;font-size:14px;line-height:16px;color:#222;font-weight:bold;white-space:nowrap;letter-spacing:0.15px">Activity time</div>
<svg style="position:absolute;left:765px;top:100px" width="11" height="6" viewBox="0 0 11 6" ><path d="M0 0H11L5.5 6Z" fill="#03093a"/></svg>
<svg style="position:absolute;left:788px;top:95px" width="8" height="14" viewBox="0 0 8 14" ><path d="M4 0.8V10" stroke="#1a1a30" stroke-width="1.3"/><path d="M1 9.3H7L4 13.2Z" fill="#1a1a30"/></svg>
<div style="position:absolute;left:803px;top:95px;width:26px;height:18px;background:#999;border-radius:9px;color:#fff;font-size:12px;font-weight:bold;line-height:18px;text-align:center">1</div>
<div style="position:absolute;left:855px;top:95px;font-size:14px;line-height:16px;color:#03093a;font-weight:normal;white-space:nowrap;">Select dimension</div>
<svg style="position:absolute;left:969px;top:100px" width="11" height="6" viewBox="0 0 11 6" ><path d="M0 0H11L5.5 6Z" fill="#03093a"/></svg>
<div style="position:absolute;left:1018px;top:92px;width:185px;height:24px;background:#3a87ad;border-radius:4px;color:#fff;font-weight:bold;font-size:13px;line-height:24px;white-space:nowrap;padding-left:5px;box-sizing:border-box;letter-spacing:0.35px">Date and time: Weekday <span style="font-size:12px;padding-left:2px">&#215;</span></div>
<div style="position:absolute;left:1231px;top:92px;width:159px;height:24px;background:#3a87ad;border-radius:4px;color:#fff;font-weight:bold;font-size:13px;line-height:24px;white-space:nowrap;padding-left:5px;box-sizing:border-box;letter-spacing:0.35px">Account: User name <span style="font-size:12px;padding-left:2px">&#215;</span></div>
<div style="position:absolute;left:1418px;top:92px;width:183px;height:24px;background:#3a87ad;border-radius:4px;color:#fff;font-weight:bold;font-size:13px;line-height:24px;white-space:nowrap;padding-left:5px;box-sizing:border-box;letter-spacing:0.35px">Application: Executable <span style="font-size:12px;padding-left:2px">&#215;</span></div>
<div style="position:absolute;left:1629px;top:92px;width:168px;height:24px;background:#3a87ad;border-radius:4px;color:#fff;font-weight:bold;font-size:13px;line-height:24px;white-space:nowrap;padding-left:5px;box-sizing:border-box;letter-spacing:0.35px">Computer: OS version <span style="font-size:12px;padding-left:2px">&#215;</span></div>
<svg style="position:absolute;left:0;top:0" width="1918" height="1080" viewBox="0 0 1918 1080" font-family="Liberation Sans, sans-serif"><rect x="740" y="205" width="1100" height="123" fill="#fdfdfd"/><rect x="740" y="328" width="1100" height="123" fill="#eeeeee"/><rect x="740" y="451" width="1100" height="123" fill="#fdfdfd"/><rect x="740" y="574" width="1100" height="123" fill="#eeeeee"/><rect x="740" y="697" width="1100" height="123" fill="#fdfdfd"/><rect x="740" y="820" width="1100" height="123" fill="#eeeeee"/><rect x="740" y="205" width="1101" height="1" fill="#ccc"/><rect x="740" y="328" width="1101" height="1" fill="#ccc"/><rect x="740" y="451" width="1101" height="1" fill="#ccc"/><rect x="740" y="574" width="1101" height="1" fill="#ccc"/><rect x="740" y="697" width="1101" height="1" fill="#ccc"/><rect x="740" y="820" width="1101" height="1" fill="#ccc"/><rect x="960" y="205" width="1" height="739" fill="#ccc"/><rect x="1180" y="205" width="1" height="739" fill="#ccc"/><rect x="1400" y="205" width="1" height="739" fill="#ccc"/><rect x="1620" y="205" width="1" height="739" fill="#ccc"/><rect x="1840" y="205" width="1" height="739" fill="#ccc"/><rect x="762" y="661" width="16" height="283" fill="#ff7f50"/><rect x="802" y="943" width="16" height="1" fill="#da70d6"/><rect x="842" y="522" width="16" height="422" fill="#6495ed"/><rect x="982" y="874" width="16" height="70" fill="#ff7f50"/><rect x="1002" y="943" width="16" height="1" fill="#87cefa"/><rect x="1042" y="943" width="16" height="1" fill="#32cd32"/><rect x="1062" y="834" width="16" height="110" fill="#6495ed"/><rect x="1143" y="921" width="16" height="23" fill="#ffa500"/><rect x="1202" y="918" width="16" height="26" fill="#ff7f50"/><rect x="1282" y="259" width="16" height="684" fill="#6495ed"/><rect x="1363" y="882" width="16" height="61" fill="#ffa500"/><rect x="1422" y="687" width="16" height="257" fill="#ff7f50"/><rect x="1442" y="941" width="16" height="3" fill="#87cefa"/><rect x="1462" y="913" width="16" height="30" fill="#da70d6"/><rect x="1502" y="873" width="16" height="71" fill="#6495ed"/><rect x="1522" y="703" width="16" height="240" fill="#ff69b4"/><rect x="1563" y="577" width="16" height="366" fill="#cd5c5c"/><rect x="1642" y="894" width="16" height="49" fill="#ff7f50"/><rect x="1702" y="880" width="16" height="64" fill="#32cd32"/><rect x="1722" y="901" width="16" height="42" fill="#6495ed"/><rect x="1742" y="752" width="16" height="191" fill="#ff69b4"/><rect x="1762" y="933" width="16" height="11" fill="#ba55d3"/><rect x="739" y="205" width="2" height="741" fill="#48b"/><rect x="740" y="944" width="1101" height="2" fill="#48b"/><rect x="740" y="946" width="1" height="4" fill="#333"/><rect x="960" y="946" width="1" height="4" fill="#333"/><rect x="1180" y="946" width="1" height="4" fill="#333"/><rect x="1400" y="946" width="1" height="4" fill="#333"/><rect x="1620" y="946" width="1" height="4" fill="#333"/><rect x="1840" y="946" width="1" height="4" fill="#333"/><text x="730" y="209" text-anchor="end" font-size="12" fill="#333">00.15 h</text><text x="730" y="332" text-anchor="end" font-size="12" fill="#333">00.125 h</text><text x="730" y="455" text-anchor="end" font-size="12" fill="#333">00.1 h</text><text x="730" y="578" text-anchor="end" font-size="12" fill="#333">00.075 h</text><text x="730" y="701" text-anchor="end" font-size="12" fill="#333">00.05 h</text><text x="730" y="824" text-anchor="end" font-size="12" fill="#333">00.025 h</text><text x="730" y="947" text-anchor="end" font-size="12" fill="#333">00 h</text><text x="850" y="961" text-anchor="middle" font-size="12" fill="#333">Monday</text><text x="1070" y="961" text-anchor="middle" font-size="12" fill="#333">Tuesday</text><text x="1290" y="961" text-anchor="middle" font-size="12" fill="#333">Wednesday</text><text x="1510" y="961" text-anchor="middle" font-size="12" fill="#333">Thursday</text><text x="1730" y="961" text-anchor="middle" font-size="12" fill="#333">Friday</text><rect x="1008" y="150" width="20" height="13" rx="3" fill="#ff7f50"/><text x="1033" y="160" font-size="12" fill="#333">Anton</text><rect x="1074" y="150" width="20" height="13" rx="3" fill="#87cefa"/><text x="1099" y="160" font-size="12" fill="#333">Maxim</text><rect x="1144" y="150" width="20" height="13" rx="3" fill="#da70d6"/><text x="1169" y="160" font-size="12" fill="#333">Yuriy</text><rect x="1204" y="150" width="20" height="13" rx="3" fill="#32cd32"/><text x="1229" y="160" font-size="12" fill="#333">inna</text><rect x="1263" y="150" width="20" height="13" rx="3" fill="#6495ed"/><text x="1288" y="160" font-size="12" fill="#333">mn</text><rect x="1316" y="150" width="20" height="13" rx="3" fill="#ff69b4"/><text x="1341" y="160" font-size="12" fill="#333">oksana</text><rect x="1392" y="150" width="20" height="13" rx="3" fill="#ba55d3"/><text x="1417" y="160" font-size="12" fill="#333">sts</text><rect x="1444" y="150" width="20" height="13" rx="3" fill="#cd5c5c"/><text x="1469" y="160" font-size="12" fill="#333">support</text><rect x="1521" y="150" width="20" height="13" rx="3" fill="#ffa500"/><text x="1546" y="160" font-size="12" fill="#333">user</text><rect x="740" y="971" width="1101" height="30" fill="#e8f1fa"/><path d="M749 980.5L1022 998L1290 999.5L1564 982L1832 998V1001H749Z" fill="#dce5ee"/><rect x="740" y="971" width="9" height="30" fill="#6b9bc4"/><rect x="742" y="984.5" width="5" height="1" fill="#fff"/><rect x="742" y="987" width="5" height="1" fill="#fff"/><rect x="1832" y="971" width="9" height="30" fill="#6b9bc4"/><rect x="1834" y="984.5" width="5" height="1" fill="#fff"/><rect x="1834" y="987" width="5" height="1" fill="#fff"/><path d="M1846.5 150V166.2H1863" fill="none" stroke="#8cc3ff" stroke-width="1.6"/><path d="M1849 164L1854 156L1858 160.5L1862 151.5" fill="none" stroke="#3a8ef0" stroke-width="1.1"/><path d="M1872.8 150V166H1889" fill="none" stroke="#33bb33" stroke-width="1.6"/><rect x="1875" y="155" width="2.6" height="9.8" fill="#33bb33"/><rect x="1879" y="151" width="2.6" height="13.8" fill="#33bb33"/><rect x="1883" y="158" width="2.6" height="6.8" fill="#33bb33"/><path d="M1898.7 149.7H1915.4V166.3H1898.7Z" fill="none" stroke="#9b6bbf" stroke-width="1.3"/><path d="M1902.5 150V158H1911.5V150" fill="none" stroke="#9b6bbf" stroke-width="1.3"/><rect x="1904" y="160.5" width="6" height="2.5" fill="#9b6bbf"/><text x="1858" y="185" font-size="12" fill="#00aa00">Bar chart</text></svg>
<svg style="position:absolute;left:673px;top:1011px" width="18" height="16" viewBox="0 0 18 16" ><rect x="0.8" y="0.8" width="16.4" height="14.4" rx="1" fill="none" stroke="#03093a" stroke-width="1.6"/><rect x="0.8" y="0.8" width="16.4" height="3.5" fill="#03093a"/><rect x="5.4" y="3" width="1.3" height="12" fill="#03093a"/><rect x="10.9" y="3" width="1.3" height="12" fill="#03093a"/><rect x="0.8" y="7.2" width="16.4" height="1.3" fill="#03093a"/><rect x="0.8" y="10.9" width="16.4" height="1.3" fill="#03093a"/></svg>
<div style="position:absolute;left:700px;top:1011px;font-size:14px;line-height:16px;color:#03093a;font-weight:normal;white-space:nowrap;">Table</div>
<svg style="position:absolute;left:755px;top:1011px" width="21" height="16" viewBox="0 0 21 16" ><path d="M1 0V15H20" fill="none" stroke="#03093a" stroke-width="1.5"/><rect x="4" y="9" width="2.6" height="5.5" fill="#03093a"/><rect x="8" y="4" width="2.6" height="10.5" fill="#03093a"/><rect x="12" y="6" width="2.6" height="8.5" fill="#03093a"/><rect x="16" y="2" width="2.6" height="12.5" fill="#03093a"/></svg>
<div style="position:absolute;left:783px;top:1011px;font-size:14px;line-height:16px;color:#03093a;font-weight:normal;white-space:nowrap;">Linear chart</div>
<svg style="position:absolute;left:879px;top:1010px" width="19" height="18" viewBox="0 0 19 18" ><path d="M9 9V1.1A7.9 7.9 0 1 0 15.05 14.08Z" fill="#03093a"/><path d="M10.2 7.8V0.5A7.3 7.3 0 0 1 17.5 7.8Z" fill="#03093a"/><path d="M11.3 9.4H18.3A7.9 7.9 0 0 1 16.4 14.6Z" fill="#03093a"/></svg>
<div style="position:absolute;left:907px;top:1011px;font-size:14px;line-height:16px;color:#03093a;font-weight:normal;white-space:nowrap;">Pie chart</div>
<svg style="position:absolute;left:985px;top:1010px" width="18" height="18" viewBox="0 0 18 18" ><path d="M0.5 10H7.5M8 10L14.5 3.5M8 10L14.5 16.5" stroke="#03093a" stroke-width="1.4"/><circle cx="8" cy="10" r="2.8" fill="#03093a"/><circle cx="14.8" cy="3.4" r="1.9" fill="#03093a"/><circle cx="14.8" cy="16.4" r="1.9" fill="#03093a"/></svg>
<div style="position:absolute;left:1013px;top:1011px;font-size:14px;line-height:16px;color:#03093a;font-weight:normal;white-space:nowrap;">Graph</div>
<svg style="position:absolute;left:1076px;top:1009px" width="16" height="19" viewBox="0 0 16 19" ><circle cx="3.5" cy="2.8" r="2" fill="none" stroke="#03093a" stroke-width="1.5"/><circle cx="12.5" cy="10.5" r="2" fill="none" stroke="#03093a" stroke-width="1.5"/><circle cx="12.5" cy="16.5" r="2" fill="none" stroke="#03093a" stroke-width="1.5"/><path d="M3.5 4.8V14Q3.5 16.5 6 16.5H10.5M3.5 8Q3.5 10.5 6 10.5H10.5" fill="none" stroke="#03093a" stroke-width="1.6"/></svg>
<div style="position:absolute;left:1102px;top:1011px;font-size:14px;line-height:16px;color:#03093a;font-weight:normal;white-space:nowrap;">Tree</div>
<svg style="position:absolute;left:12px;top:1011px" width="21" height="16" viewBox="0 0 21 16" ><path d="M1 0V15H20" fill="none" stroke="#fff" stroke-width="1.5"/><rect x="4" y="9" width="2.6" height="5.5" fill="#fff"/><rect x="8" y="4" width="2.6" height="10.5" fill="#fff"/><rect x="12" y="6" width="2.6" height="8.5" fill="#fff"/><rect x="16" y="2" width="2.6" height="12.5" fill="#fff"/></svg>
<div style="position:absolute;left:40px;top:1011px;font-size:14px;line-height:16px;color:#fff;font-weight:normal;white-space:nowrap;">Filters</div>
<svg style="position:absolute;left:101px;top:1013px" width="15" height="15" viewBox="0 0 15 15" ><path d="M0 0H15L9.2 6.5V14L5.8 11.5V6.5Z" fill="#fff"/></svg>
<div style="position:absolute;left:127px;top:1011px;font-size:14px;line-height:16px;color:#fff;font-weight:normal;white-space:nowrap;">Constructor</div>
<svg style="position:absolute;left:17px;top:1049px" width="18" height="18" viewBox="0 0 18 18" ><path d="M13.1 4.1A6.5 6.5 0 1 0 14.2 13.1" fill="none" stroke="#03093a" stroke-width="2.9"/><path d="M9.8 8.3H17.3V0.9Z" fill="#03093a"/></svg>
<div style="position:absolute;left:45px;top:1050px;font-size:14px;line-height:16px;color:#03093a;font-weight:normal;white-space:nowrap;">Update</div>
<div style="position:absolute;left:137px;top:1048px;white-space:nowrap;font-size:0"><span style="display:inline-block;height:18px;line-height:18px;background:#3a87ad;border-radius:9px;color:#fff;font-size:13px;padding:0 10px 0 11px;margin-right:12px">&#177; Account: User name: <b>mn</b> <span style="font-size:11px;font-weight:bold;padding-left:3px">&#215;</span></span><span style="display:inline-block;height:18px;line-height:18px;background:#3a87ad;border-radius:9px;color:#fff;font-size:13px;padding:0 10px 0 11px;margin-right:12px">&#177; Account: User name: <b>user</b> <span style="font-size:11px;font-weight:bold;padding-left:3px">&#215;</span></span><span style="display:inline-block;height:18px;line-height:18px;background:#3a87ad;border-radius:9px;color:#fff;font-size:13px;padding:0 10px 0 11px;margin-right:12px">&#177; Account: User name: <b>support</b> <span style="font-size:11px;font-weight:bold;padding-left:3px">&#215;</span></span><span style="display:inline-block;height:18px;line-height:18px;background:#3a87ad;border-radius:9px;color:#fff;font-size:13px;padding:0 10px 0 11px;margin-right:12px">&#177; Account: User name: <b>Maxim</b> <span style="font-size:11px;font-weight:bold;padding-left:3px">&#215;</span></span><span style="display:inline-block;height:18px;line-height:18px;background:#3a87ad;border-radius:9px;color:#fff;font-size:13px;padding:0 10px 0 11px;margin-right:12px">&#177; Account: User name: <b>oksana</b> <span style="font-size:11px;font-weight:bold;padding-left:3px">&#215;</span></span><span style="display:inline-block;height:18px;line-height:18px;background:#3a87ad;border-radius:9px;color:#fff;font-size:13px;padding:0 10px 0 11px;margin-right:12px">&#177; Account: User name: <b>Yuriy</b> <span style="font-size:11px;font-weight:bold;padding-left:3px">&#215;</span></span><span style="display:inline-block;height:18px;line-height:18px;background:#3a87ad;border-radius:9px;color:#fff;font-size:13px;padding:0 10px 0 11px;margin-right:12px">&#177; Account: User name: <b>inna</b> <span style="font-size:11px;font-weight:bold;padding-left:3px">&#215;</span></span><span style="display:inline-block;height:18px;line-height:18px;background:#3a87ad;border-radius:9px;color:#fff;font-size:13px;padding:0 10px 0 11px;margin-right:12px">&#177; Account: User name: <b>sts</b> <span style="font-size:11px;font-weight:bold;padding-left:3px">&#215;</span></span></div>
<svg style="position:absolute;left:1905px;top:1040px" width="11" height="7" viewBox="0 0 11 7" ><path d="M1 6L5.5 1.2L10 6" fill="none" stroke="#555" stroke-width="1.8"/></svg>
<svg style="position:absolute;left:1905px;top:1069px" width="11" height="7" viewBox="0 0 11 7" ><path d="M1 1L5.5 5.8L10 1" fill="none" stroke="#555" stroke-width="1.8"/></svg>
</body></html>
